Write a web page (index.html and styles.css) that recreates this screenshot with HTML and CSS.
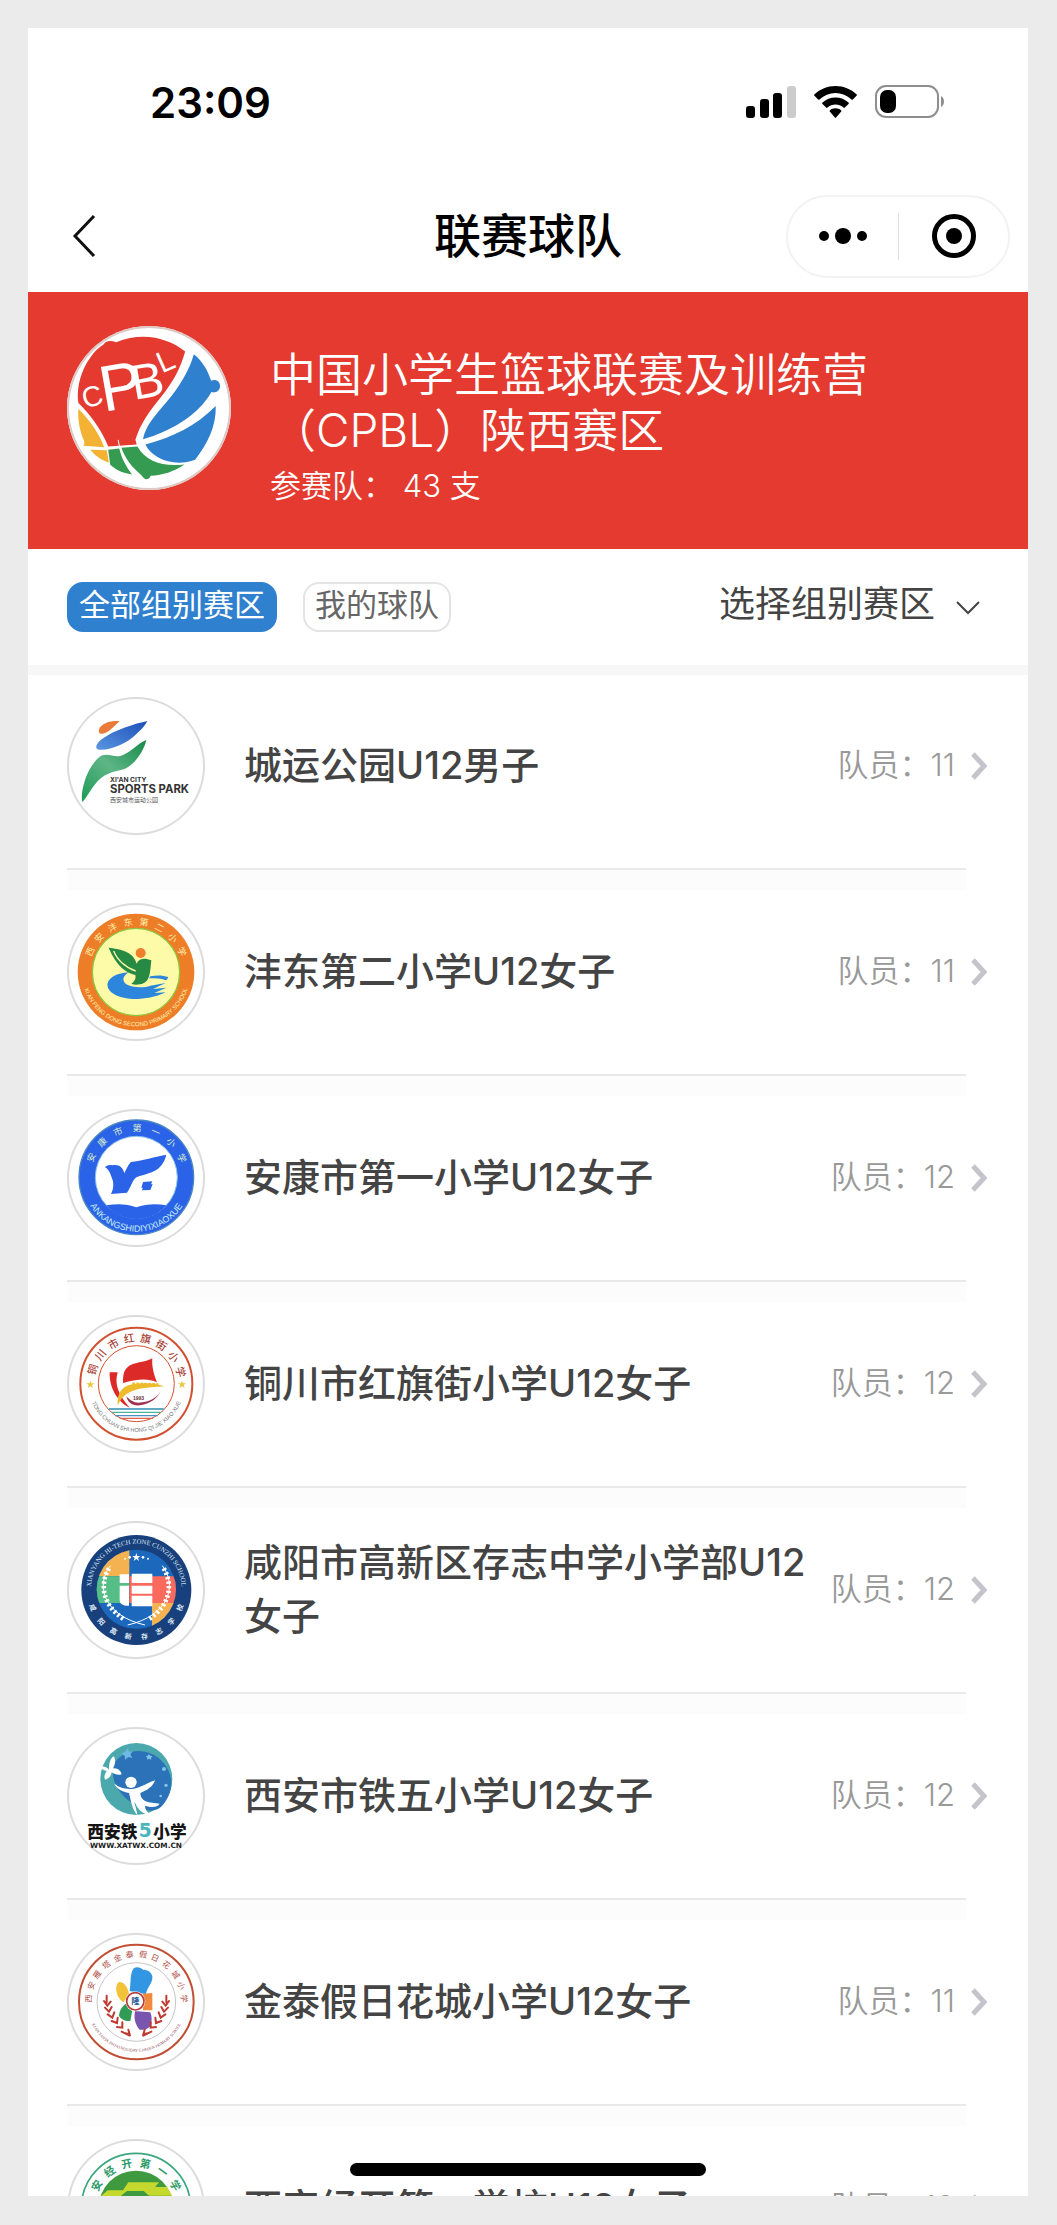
FILE: index.html
```html
<!DOCTYPE html>
<html lang="zh-CN">
<head>
<meta charset="utf-8">
<meta name="viewport" content="width=device-width, initial-scale=1">
<title>联赛球队</title>
<link rel="stylesheet" href="styles.css">
</head>
<body>
<div class="screen">
  <div class="status">
    <span class="clock">23:09</span>
    <div class="status-icons">
      <svg width="50" height="32" viewBox="0 0 50 32" aria-hidden="true"><rect x="0" y="20" width="9" height="12" rx="3"/><rect x="14" y="13" width="9" height="19" rx="3"/><rect x="27" y="7" width="9" height="25" rx="3"/><rect x="41" y="0" width="9" height="32" rx="3" fill="#ccc"/></svg>
      <svg width="43" height="32" viewBox="0 0 43 32" aria-hidden="true"><path d="M21.500 0C13.500 0 6 3.200.5 8.300a1 1 0 0 0 0 1.500l3.600 3.600a1 1 0 0 0 1.400 0C10 9.300 15.500 7 21.500 7s11.500 2.300 16 6.400a1 1 0 0 0 1.400 0l3.600-3.600a1 1 0 0 0 0-1.500C37 3.200 29.500 0 21.500 0z"/><path d="M21.500 11.500c-5 0-9.500 1.900-13 5a1 1 0 0 0 0 1.500l3.600 3.600a1 1 0 0 0 1.400 0c2.200-1.900 5-3 8-3s5.800 1.100 8 3a1 1 0 0 0 1.400 0l3.600-3.600a1 1 0 0 0 0-1.500c-3.500-3.100-8-5-13-5z"/><path d="M21.500 22.300c-2.200 0-4 .7-5.500 1.900a1 1 0 0 0 0 1.500l4.700 5.500a1 1 0 0 0 1.600 0l4.700-5.500a1 1 0 0 0 0-1.500c-1.500-1.200-3.300-1.900-5.500-1.900z"/></svg>
      <svg width="70" height="34" viewBox="0 0 70 34" aria-hidden="true"><rect x="1" y="1" width="62" height="31" rx="10" fill="none" stroke="#8e8e8e" stroke-width="2"/><rect x="5" y="5" width="16" height="23" rx="7"/><path d="M66 11c4 2 4 9 0 11z" fill="#8e8e8e"/></svg>
    </div>
  </div>

  <header class="nav">
    <button class="icon-button back" type="button" aria-label="返回"><svg width="28" height="46" viewBox="0 0 28 46"><path d="M24 3L5 23l19 20" fill="none" stroke="#111" stroke-width="3"/></svg></button>
    <h1 class="nav-title">联赛球队</h1>
    <div class="capsule">
      <button class="icon-button" type="button" aria-label="更多"><svg width="50" height="20" viewBox="0 0 50 20"><circle cx="6" cy="10" r="5"/><circle cx="25" cy="10" r="8"/><circle cx="44" cy="10" r="5"/></svg></button>
      <button class="icon-button" type="button" aria-label="关闭"><svg width="44" height="44" viewBox="0 0 44 44"><circle cx="22" cy="22" r="19.500" fill="none" stroke="#000" stroke-width="5"/><circle cx="22" cy="22" r="8"/></svg></button>
    </div>
  </header>

  <section class="league">
    <svg class="league-logo" viewBox="50 47 494 494" role="img" aria-label="CPBL">
      <path d="M84 278C74 195 126 122 160 103c8-14 24-12 38-7 84-34 160-10 208 28-14 50-36 92-74 138-34 42-62 80-76 128l4 14-86 6C154 356 116 310 84 278z" fill="#e53a30"/>
      <path d="M432 132c30 24 44 54 52 80 14-6 28 2 27 18-2 14-16 20-26 16-40 72-130 122-206 142 10-54 60-94 96-144 26-36 44-72 52-96z" fill="#2f80cf"/>
      <path d="M498 288c2 60-24 112-62 162-64 24-130-4-150-46 84-22 152-56 212-116z" fill="#2f80cf"/>
      <path d="M84 296c36 36 64 76 78 116l-62-4c4-8 2-14 0-18-12-30-18-62-16-94z" fill="#f3b233"/><path d="M120 420l50 1 6 38c-24-8-42-22-56-39z" fill="#f3b233"/>
      <path d="M174 420l34-4c6 30 20 54 38 78-28-4-50-14-66-30z" fill="#349b50"/><path d="M214 414l48-4c24 44 76 62 142 54-32 22-66 32-102 34-4 14-20 14-26 0-32-26-52-54-62-84z" fill="#349b50"/>
      <path d="M204 390l6 30" stroke="#fff" stroke-width="3"/>
      <g fill="#fff" class="hand"><text x="104" y="296" font-size="86" transform="rotate(-16 104 296)">C</text><text x="160" y="306" font-size="196" transform="rotate(-10 160 306)">P</text><text x="252" y="270" font-size="148" transform="rotate(-10 252 270)">B</text><text x="336" y="190" font-size="90" transform="rotate(-24 336 190)">L</text></g>
    </svg>
    <div class="league-text">
      <h2 class="league-name">中国小学生篮球联赛及训练营（CPBL）陕西赛区</h2>
      <p class="league-count">参赛队： 43 支</p>
    </div>
  </section>

  <div class="filters">
    <button class="chip chip-active" type="button">全部组别赛区</button>
    <button class="chip" type="button">我的球队</button>
    <label class="picker"><select aria-label="选择组别赛区"><option>选择组别赛区</option></select><svg width="24" height="14" viewBox="0 0 24 14" aria-hidden="true"><path d="M1 1l11 11L23 1" fill="none" stroke="#444" stroke-width="2"/></svg></label>
  </div>

  <ul class="teams">
    <li><a class="team" href="#">
      <svg class="emblem" viewBox="50 55 414 414" aria-hidden="true">
        <defs><linearGradient id="gGreen" x1="0" y1="1" x2="1" y2="0"><stop offset="0" stop-color="#1d9a55"/><stop offset=".5" stop-color="#5db586"/><stop offset="1" stop-color="#178a48"/></linearGradient><linearGradient id="gBlue" x1="0" y1="1" x2="1" y2="0"><stop offset="0" stop-color="#5a96e0"/><stop offset="1" stop-color="#1c4fb8"/></linearGradient></defs>
        <path d="M208 127c-24-2-48 4-58 18-6 8-6 18 0 20 16 4 38-18 58-38z" fill="#ea7a3a"/>
        <path d="M291 127c-36 8-98 26-136 54-18 14-24 30-8 32 30 4 84-20 108-44 16-14 28-26 36-42z" fill="url(#gBlue)"/>
        <path d="M288 184c-26 10-52 42-78 48-20 4-34-8-54-2-20 8-42 44-52 74-8 28-12 46-8 66 10-8 22-32 36-50 26-36 56-40 88-48 34-14 60-54 68-88z" fill="url(#gGreen)"/>
        <g font-family="Inter" font-weight="700" fill="#333"><text x="179" y="309" font-size="20">XI'AN CITY</text><text x="179" y="344" font-size="34">SPORTS PARK</text></g>
        <text x="179" y="369" font-size="18" fill="#555" class="cjk">西安城市运动公园</text>
      </svg>
      <span class="team-name">城运公园U12男子</span><span class="team-count">队员：11</span><svg class="arrow" viewBox="0 0 18 30"><path d="M3 3l11 12L3 27"/></svg></a></li>
    <li><a class="team" href="#">
      <svg class="emblem" viewBox="50 42 414 414" aria-hidden="true">
        <circle cx="257" cy="249" r="175" fill="#ee7d27"/><circle cx="257" cy="249" r="131" fill="#fdfba8" stroke="#8cc63e" stroke-width="4"/>
        <path d="M236 250c-40 2-68 20-64 42 4 24 44 40 92 38 34-2 62-10 82-20l-34 2 36-16-40 4 38-18-46 8c-20 8-56 6-72-4-16-12-8-28 8-36z" fill="#2b86dc"/>
        <path d="M300 262c18-4 36-4 54 2-2 6-6 10-8 10-14-6-30-6-50-6z" fill="#2b86dc"/>
        <path d="M175 176c32 4 74 10 84 48 4-12 16-16 30-14l14 4c-4 34-2 68-34 72-10 2-18 2-26-2 12-8 14-18 12-26-28-6-58-28-80-82z" fill="#278a42"/><path d="M190 186c10 26 36 50 66 60" fill="none" stroke="#fdfba8" stroke-width="4"/><circle cx="271" cy="192" r="15" fill="#f07f2c"/>
        <g class="cjk" fill="#fff3b0" font-size="27" text-anchor="middle"><text x="257" y="108" transform="rotate(-66 257 249)">西</text><text x="257" y="108" transform="rotate(-47 257 249)">安</text><text x="257" y="108" transform="rotate(-28 257 249)">沣</text><text x="257" y="108" transform="rotate(-9 257 249)">东</text><text x="257" y="108" transform="rotate(9 257 249)">第</text><text x="257" y="108" transform="rotate(28 257 249)">二</text><text x="257" y="108" transform="rotate(47 257 249)">小</text><text x="257" y="108" transform="rotate(66 257 249)">学</text></g>
        <path id="arc2" d="M94 249a163 163 0 0 0 326 0" fill="none"/><text class="lat" font-size="18" fill="#fff3b0" text-anchor="middle"><textPath href="#arc2" startOffset="50%">XI AN FENG DONG SECOND PRIMARY SCHOOL</textPath></text>
      </svg>
      <span class="team-name">沣东第二小学U12女子</span><span class="team-count">队员：11</span><svg class="arrow" viewBox="0 0 18 30"><path d="M3 3l11 12L3 27"/></svg></a></li>
    <li><a class="team" href="#">
      <svg class="emblem" viewBox="50 45 414 414" aria-hidden="true">
        <circle cx="258" cy="250" r="172" fill="#2b63e8" stroke="#4a86c0" stroke-width="4"/><circle cx="258" cy="250" r="123" fill="#fff" stroke="#8fc0e8" stroke-width="3"/>
        <path d="M348 182c-30 6-76 18-106 22-10 10-14 22-20 34-4-18-16-28-36-24-8-2-16 0-22 6 14 8 18 24 24 42 2 18 0 26-6 38l48-4c12-16 14-34 28-46 34-14 76-12 90-68z" fill="#2b63e8"/>
        <path d="M278 264l28-2-4 9 5-1-7 18-26 1 4-8-5 1z" fill="#2b63e8"/>
        <path d="M168 334c34-6 64-4 90 6 28-10 58-12 90-6-24 28-56 41-90 41s-68-13-90-41z" fill="#2b63e8"/>
        <g class="cjk" fill="#d8ecc8" font-size="27" text-anchor="middle"><text x="258" y="112" transform="rotate(-66 258 250)">安</text><text x="258" y="112" transform="rotate(-44 258 250)">康</text><text x="258" y="112" transform="rotate(-22 258 250)">市</text><text x="258" y="112" transform="rotate(1 258 250)">第</text><text x="258" y="112" transform="rotate(23 258 250)">一</text><text x="258" y="112" transform="rotate(45 258 250)">小</text><text x="258" y="112" transform="rotate(67 258 250)">学</text></g>
        <path id="arc3" d="M95 250a163 163 0 0 0 326 0" fill="none"/><text class="lat" font-size="27" fill="#c4ecf2" text-anchor="middle"><textPath href="#arc3" startOffset="50%">ANKANGSHIDIYIXIAOXUE</textPath></text>
      </svg>
      <span class="team-name">安康市第一小学U12女子</span><span class="team-count">队员：12</span><svg class="arrow" viewBox="0 0 18 30"><path d="M3 3l11 12L3 27"/></svg></a></li>
    <li><a class="team" href="#">
      <svg class="emblem" viewBox="50 46 414 414" aria-hidden="true">
        <g fill="none" stroke="#d2502f"><circle cx="258" cy="252" r="168" stroke-width="6"/><circle cx="258" cy="252" r="114" stroke-width="3"/></g>
        <path d="M306 176c-2 24 4 46 14 72-30-14-64-8-102 2 0-14 0-24 4-34 18-34 52-22 84-40z" fill="#dc2a28"/>
        <path d="M178 218h24c-8 30-4 60 36 106-36-16-62-60-60-106z" fill="#dc2a28"/>
        <path d="M202 318c-2-36 10-58 44-64 38-6 66-4 96 6-44 4-80 4-108 20-18 10-24 22-32 38z" fill="#eebb2c"/><path d="M246 252l78 2" stroke="#eebb2c" stroke-width="7" stroke-dasharray="8 4"/>
        <path d="M228 290c6 24 24 30 46 26 24-4 46-18 58-42-8 14-30 32-56 34-24 4-34-4-48-18z" fill="#a03050"/>
        <text x="248" y="302" font-size="15" class="lat" font-weight="700" fill="#633">1993</text>
        <path d="M176 328h164" stroke="#2b8db0" stroke-width="4"/><path d="M184 338h148" stroke="#49b39a" stroke-width="4"/><path d="M194 348h128" stroke="#4a90c8" stroke-width="4"/><path d="M208 356h100" stroke="#e0604c" stroke-width="4"/>
        <path d="M120 243l3 8h9l-7 5 3 9-8-5-8 5 3-9-7-5h9zM395 243l3 8h9l-7 5 3 9-8-5-8 5 3-9-7-5h9z" fill="#e8c840"/>
        <g class="cjk" fill="#a84438" font-size="32" font-weight="500" text-anchor="middle"><text x="258" y="126" transform="rotate(-72 258 252)">铜</text><text x="258" y="126" transform="rotate(-51 258 252)">川</text><text x="258" y="126" transform="rotate(-30 258 252)">市</text><text x="258" y="126" transform="rotate(-9 258 252)">红</text><text x="258" y="126" transform="rotate(12 258 252)">旗</text><text x="258" y="126" transform="rotate(33 258 252)">街</text><text x="258" y="126" transform="rotate(54 258 252)">小</text><text x="258" y="126" transform="rotate(75 258 252)">学</text></g>
        <path id="arc4" d="M113 252a145 145 0 0 0 290 0" fill="none"/><text class="lat" font-size="17" fill="#777" text-anchor="middle"><textPath href="#arc4" startOffset="50%">TONG CHUAN SHI HONG QI JIE XIAO XUE</textPath></text>
      </svg>
      <span class="team-name">铜川市红旗街小学U12女子</span><span class="team-count">队员：12</span><svg class="arrow" viewBox="0 0 18 30"><path d="M3 3l11 12L3 27"/></svg></a></li>
    <li><a class="team" href="#">
      <svg class="emblem" viewBox="50 48 414 414" aria-hidden="true">
        <defs><clipPath id="disc5"><circle cx="258" cy="253" r="119"/></clipPath></defs>
        <circle cx="258" cy="255" r="165" fill="#17407c"/>
        <g clip-path="url(#disc5)"><path fill="#1b68bd" d="M130 130h260v250H130z"/><path fill="#f4b350" d="M130 130h107v84H130zM305 294h90v90h-90z"/><path fill="#55bd85" d="M130 214h107v80H130z"/><path fill="#fb6a5c" d="M237 214h160v80H237z"/></g>
        <path fill="#fff" d="M208 208h28v26h-28zM244 206h62v28h-62zM208 242h28v60c-20 0-28-6-28-18zM244 242h62v24h-62zM244 272h62v32h-62z"/>
        <g fill="none" stroke="#fff" stroke-width="14" stroke-dasharray="7 7"><path d="M176 190c-30 50-18 112 44 152"/><path d="M340 190c30 50 18 112-44 152"/></g><g fill="none" stroke="#fff" stroke-width="3"><path d="M180 182c-46 60-20 150 104 178"/><path d="M336 182c46 60 20 150-104 178"/></g>
        <path d="M258 144l3 9h9l-7 6 3 9-8-6-8 6 3-9-7-6h9z" fill="#fff"/><g fill="#fff"><circle cx="224" cy="161" r="3"/><circle cx="238" cy="157" r="4"/><circle cx="278" cy="157" r="4"/><circle cx="293" cy="161" r="3"/></g>
        <path id="arc5" d="M124 275A136 136 0 1 1 392 275" fill="none"/><text font-family="Liberation Serif" font-size="20" fill="#dfe9f5" text-anchor="middle"><textPath href="#arc5" startOffset="50%">XIANYANG HI-TECH ZONE CUNZHI SCHOOL</textPath></text>
        <g class="cjk" fill="#dfe9f5" font-size="21" font-weight="700" text-anchor="middle"><text x="258" y="404" transform="rotate(68 258 255)">咸</text><text x="258" y="404" transform="rotate(48 258 255)">阳</text><text x="258" y="404" transform="rotate(29 258 255)">高</text><text x="258" y="404" transform="rotate(10 258 255)">新</text><text x="258" y="404" transform="rotate(-10 258 255)">存</text><text x="258" y="404" transform="rotate(-29 258 255)">志</text><text x="258" y="404" transform="rotate(-48 258 255)">学</text><text x="258" y="404" transform="rotate(-68 258 255)">校</text></g>
      </svg>
      <span class="team-name">咸阳市高新区存志中学小学部U12女子</span><span class="team-count">队员：12</span><svg class="arrow" viewBox="0 0 18 30"><path d="M3 3l11 12L3 27"/></svg></a></li>
    <li><a class="team" href="#">
      <svg class="emblem" viewBox="50 48 414 414" aria-hidden="true">
        <circle cx="258" cy="204" r="108" fill="#4ba9ae"/><path d="M194 154c30-40 90-44 130-14 48 40 52 100 10 146-20 20-50 16-80-4-50-30-80-80-60-128z" fill="#2b72b8"/>
        <path d="M150 166c14 0 22 4 26 10 0-20 4-34 14-40 8 10 4 26-2 36 14-2 24 8 26 18-10 4-22 0-30-6-2 12-10 20-20 22-4-8 0-20 6-26-10 0-18-6-20-14z" fill="#fff"/>
        <circle cx="242" cy="214" r="17" fill="#fff"/><path d="M192 218c16 12 28 14 46 16 26 2 46-16 76-26-4 16-22 30-44 38 0 10 4 18 14 24 14 6 30 6 44 8-8 12-24 12-44 6 0 10 6 18 16 28-26-4-38-18-48-40l10 42c-18-20-20-46-26-68-20-4-36-12-44-28z" fill="#fff"/>
        <path d="M232 112l4 10 11-1-7 9 6 11-12-3-10 8-1-12-10-6 11-5z" fill="#6fb9e6"/><path d="M296 128l3 6 8 1-5 5 1 6-7-3-6 3 1-6-5-5 7-1z" fill="#7fc4ea"/><g fill="#7fc4ea"><circle cx="341" cy="174" r="6"/><circle cx="347" cy="223" r="5"/><circle cx="331" cy="255" r="4"/></g>
        <g class="cjk" font-weight="900" font-size="50" fill="#151515"><text x="111" y="380">西安铁</text><text x="265" y="378" fill="#4bb5bd" font-family="DejaVu Sans" font-size="56">5</text><text x="309" y="380">小学</text></g>
        <text x="257" y="411" font-size="22" font-family="DejaVu Sans" font-weight="700" fill="#222" text-anchor="middle">WWW.XATWX.COM.CN</text>
      </svg>
      <span class="team-name">西安市铁五小学U12女子</span><span class="team-count">队员：12</span><svg class="arrow" viewBox="0 0 18 30"><path d="M3 3l11 12L3 27"/></svg></a></li>
    <li><a class="team" href="#">
      <svg class="emblem" viewBox="50 50 414 414" aria-hidden="true">
        <circle cx="258" cy="257" r="172" fill="none" stroke="#c24e35" stroke-width="6"/><circle cx="258" cy="257" r="118" fill="none" stroke="#a8a8a8" stroke-width="2"/>
        <path d="M250 156c10-6 22-2 28 4 14 0 26 8 28 20 2 20-14 30-20 54l-48-10c4-24 0-52 12-68z" fill="#3296e2"/><path d="M204 198c12-4 26 8 32 34l-16 26c-20-10-30-44-16-60z" fill="#f2c238"/><path d="M278 232l28-2v52h-28z" fill="#f18a3e"/><path d="M226 262l20 20-6 32c-14 2-30-6-34-16 2-18 8-26 20-36z" fill="#2f9b55"/><path d="M254 284l46 4c6 14 4 26 2 40-10 10-22 14-34 12-14-16-18-34-14-56z" fill="#7a55b0"/>
        <circle cx="255" cy="255" r="30" fill="#fff"/><circle cx="255" cy="255" r="26" fill="#fff" stroke="#b83c3c" stroke-width="5"/><text x="255" y="264" font-size="25" class="cjk" font-weight="700" fill="#2c5a98" text-anchor="middle">隆</text>
        <g fill="none" stroke="#bf3a30" stroke-width="6" stroke-linecap="round"><path d="M169 238v20M161 254l10 14 10-12M164 274l12 12 8-14M172 294l14 10 6-16M184 314l16 6 2-16M200 332l16 2v-16M222 350l16 4-4-14M214 346l24 12"/><path d="M348 238v20M356 254l-10 14-10-12M353 274l-12 12-8-14M345 294l-14 10-6-16M333 314l-16 6-2-16M317 332l-16 2v-16M295 350l-16 4 4-14M303 346l-24 12"/></g>
        <g class="cjk" fill="#b05048" font-size="24" text-anchor="middle"><text x="258" y="122" transform="rotate(-86 258 257)">西</text><text x="258" y="122" transform="rotate(-70 258 257)">安</text><text x="258" y="122" transform="rotate(-55 258 257)">雁</text><text x="258" y="122" transform="rotate(-39 258 257)">塔</text><text x="258" y="122" transform="rotate(-23 258 257)">金</text><text x="258" y="122" transform="rotate(-8 258 257)">泰</text><text x="258" y="122" transform="rotate(8 258 257)">假</text><text x="258" y="122" transform="rotate(23 258 257)">日</text><text x="258" y="122" transform="rotate(39 258 257)">花</text><text x="258" y="122" transform="rotate(55 258 257)">城</text><text x="258" y="122" transform="rotate(70 258 257)">小</text><text x="258" y="122" transform="rotate(86 258 257)">学</text></g>
        <path id="arc7" d="M109 257a149 149 0 0 0 298 0" fill="none"/><text font-family="Liberation Serif" font-size="12" fill="#845" text-anchor="middle"><textPath href="#arc7" startOffset="50%">XI'AN YANTA JINTAI HOLIDAY GARDEN PRIMARY SCHOOL</textPath></text>
      </svg>
      <span class="team-name">金泰假日花城小学U12女子</span><span class="team-count">队员：11</span><svg class="arrow" viewBox="0 0 18 30"><path d="M3 3l11 12L3 27"/></svg></a></li>
    <li><a class="team" href="#">
      <svg class="emblem" viewBox="0 0 414 414" aria-hidden="true">
        <circle cx="207" cy="207" r="164" fill="none" stroke="#3aa77e" stroke-width="5"/><circle cx="207" cy="207" r="112" fill="#3f9a3f"/>
        <path d="M184 130h92l-12 14h36l16 26h-70l-16-14h-50l-30 24h-58l30-26h46z" fill="#c4d82e"/><path d="M118 174h80l-20 36h-70z" fill="#e6e24a"/>
        <g class="cjk" fill="#2c9a68" font-weight="700" font-size="32" text-anchor="middle"><text x="207" y="83" transform="rotate(-84 207 207)">西</text><text x="207" y="83" transform="rotate(-60 207 207)">安</text><text x="207" y="83" transform="rotate(-36 207 207)">经</text><text x="207" y="83" transform="rotate(-12 207 207)">开</text><text x="207" y="83" transform="rotate(12 207 207)">第</text><text x="207" y="83" transform="rotate(36 207 207)">一</text><text x="207" y="83" transform="rotate(60 207 207)">学</text><text x="207" y="83" transform="rotate(84 207 207)">校</text></g>
      </svg>
      <span class="team-name">西安经开第一学校U12女子</span><span class="team-count">队员：12</span><svg class="arrow" viewBox="0 0 18 30"><path d="M3 3l11 12L3 27"/></svg></a></li>
  </ul>
  <div class="home-indicator"></div>
</div>
</body>
</html>
```

FILE: styles.css
```css
* { box-sizing: border-box; }

body {
  margin: 0;
  padding: 28px 29px 29px 28px;
  height: 100vh;
  background: #ebebeb;
  color: #444;
  font-family: Inter, "Noto Sans CJK SC", sans-serif;
}

h1, h2, p, ul { margin: 0; padding: 0; }

button, select {
  margin: 0;
  padding: 0;
  border: 0;
  background: none;
  color: inherit;
  font: inherit;
}

svg { display: block; flex: none; }

.cjk { font-family: "Noto Sans CJK SC", sans-serif; }
.lat { font-family: "Liberation Sans", sans-serif; }
.hand { font-family: "Liberation Sans Narrow", "Liberation Sans", sans-serif; font-weight: 400; }

.screen {
  position: relative;
  display: flex;
  flex-direction: column;
  height: 100%;
  overflow: hidden;
  background: #fff;
}

/* Status bar */
.status {
  display: flex;
  flex: none;
  align-items: center;
  justify-content: space-between;
  height: 148px;
  padding: 0 83px 0 122px;
}

.clock { color: #000; font-size: 42px; font-weight: 600; }
.status-icons { display: flex; align-items: center; gap: 18px; }

/* Navigation bar */
.nav {
  display: grid;
  flex: none;
  grid-template-columns: 1fr auto 1fr;
  align-items: center;
  height: 116px;
  padding: 4px 18px 0;
}

.nav-title { color: #000; font-size: 47px; font-weight: 500; line-height: 56px; }
.icon-button { display: flex; align-items: center; justify-content: center; }
.back { justify-self: start; margin-left: 24px; }

.capsule {
  display: grid;
  grid-template-columns: 1fr 1fr;
  justify-self: end;
  width: 224px;
  height: 83px;
  padding: 16px 0;
  border: 2px solid #f2f2f2;
  border-radius: 42px;
}

.capsule .icon-button + .icon-button { border-left: 1px solid #ddd; }

/* League banner */
.league {
  display: flex;
  flex: none;
  gap: 39px;
  height: 257px;
  padding: 34px 39px;
  background: #e53a30;
  color: #fff;
}

.league-logo {
  width: 164px;
  height: 164px;
  border-radius: 50%;
  background: #fff;
  box-shadow: inset 0 0 0 2px #ddc8c4;
}

.league-text { padding-top: 20px; }
.league-name { font-size: 46px; font-weight: 350; line-height: 56px; }
.league-count { font-size: 31px; font-weight: 350; line-height: 56px; }

/* Filters */
.filters {
  display: flex;
  flex: none;
  align-items: flex-start;
  gap: 26px;
  height: 116px;
  padding: 33px 48px 0 39px;
}

.chip {
  height: 50px;
  padding: 0 10px 4px;
  border: 2px solid #e4e4e4;
  border-radius: 16px;
  color: #666;
  font-size: 31px;
  line-height: 42px;
}

.chip-active { border-color: #2f80cf; background: #2f80cf; color: #fff; }

.picker {
  display: flex;
  align-items: center;
  gap: 20px;
  margin-left: auto;
  font-size: 36px;
}

.picker svg { margin-top: 8px; }
.picker select { appearance: none; line-height: 44px; }

/* Team list */
.teams {
  flex: 1;
  min-height: 0;
  overflow-y: auto;
  border-top: 10px solid #f7f7f7;
  scrollbar-width: none;
  list-style: none;
}

.teams li {
  margin: 0 62px 0 39px;
  border-bottom: 2px solid #e9e9e9;
  background: linear-gradient(#fcfcfc 20px, #fff 20px);
}

.teams li:first-child { background: none; }
.teams li:first-child .team { padding-top: 22px; }

.team {
  display: flex;
  align-items: center;
  margin-right: -22px;
  padding: 33px 0;
  color: #444;
  text-decoration: none;
}

.emblem {
  width: 138px;
  height: 138px;
  border-radius: 50%;
  background: #fff;
  box-shadow: inset 0 0 0 2px #dcdcdf;
}

.team-name {
  flex: 1;
  margin: 0 16px 0 39px;
  padding-bottom: 2px;
  font-size: 38px;
  font-weight: 500;
  line-height: 54px;
}

.team-count {
  padding-bottom: 2px;
  color: #999;
  font-size: 31px;
  font-weight: 350;
  line-height: 44px;
  white-space: nowrap;
}

.arrow {
  width: 18px;
  height: 30px;
  margin-left: 15px;
  fill: none;
  stroke: #c4c4ca;
  stroke-width: 5;
}

.home-indicator {
  position: absolute;
  bottom: 20px;
  left: 50%;
  width: 356px;
  height: 13px;
  margin-left: -178px;
  border-radius: 7px;
  background: #000;
}
```
